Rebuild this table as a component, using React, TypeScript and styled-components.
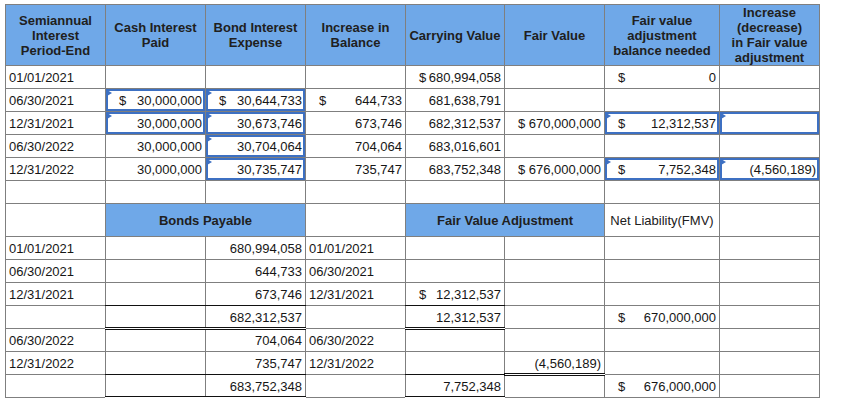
import React from "react";
import styled, { createGlobalStyle, css } from "styled-components";

const GlobalStyle = createGlobalStyle`
  html, body { margin: 0; padding: 0; background: #ffffff; }
  body { font-family: "Liberation Sans", Arial, Helvetica, sans-serif; }
`;

const SEL = "#3d70c2";
const GRID = "#7f7f7f";
const HEAD_BG = "#6fa8e8";

const Page = styled.div`
  padding: 4px 0 0 5px;
`;

const Sheet = styled.div`
  display: grid;
  grid-template-columns: 99px 99px 99px 99px 98px 99px 114px 99px;
  grid-template-rows: 60px repeat(6, 22px) 32px repeat(7, 22px);
  gap: 1px;
  width: max-content;
  background: ${GRID};
  border: 1px solid ${GRID};
`;

type Align = "left" | "right" | "center";

interface CellProps {
  $align?: Align;
  $span?: number;
  $sel?: boolean;
  $rule?: boolean;
  $dbl?: boolean;
}

const Cell = styled.div<CellProps>`
  position: relative;
  box-sizing: border-box;
  display: flex;
  align-items: center;
  justify-content: ${(p) =>
    p.$align === "right" ? "flex-end" : p.$align === "center" ? "center" : "flex-start"};
  padding: 0 3px;
  background: #ffffff;
  color: #161616;
  font-size: 13px;
  white-space: nowrap;
  grid-column: span ${(p) => p.$span ?? 1};
  ${(p) =>
    p.$sel &&
    css`
      box-shadow: inset 0 0 0 2px ${SEL};
    `}
  ${(p) =>
    p.$rule &&
    css`
      &::before {
        content: "";
        position: absolute;
        left: -1px;
        right: -1px;
        top: -1px;
        height: 1px;
        background: #111;
        z-index: 1;
      }
    `}
  ${(p) =>
    p.$dbl &&
    css`
      &::after {
        content: "";
        position: absolute;
        left: -1px;
        right: -1px;
        bottom: -2px;
        height: 3px;
        box-sizing: border-box;
        border-top: 1px solid #111;
        border-bottom: 1px solid #111;
        background: #ffffff;
        z-index: 1;
      }
    `}
`;

const HeadCell = styled(Cell)<{ $plain?: boolean }>`
  justify-content: center;
  text-align: center;
  white-space: normal;
  line-height: 15px;
  padding: 0 2px;
  font-weight: ${(p) => (p.$plain ? "normal" : "bold")};
  color: #202020;
  background: ${(p) => (p.$plain ? "#ffffff" : HEAD_BG)};
`;

const Dollar = styled.span`
  margin-left: 10px;
`;

const Amount = styled.span`
  margin-left: auto;
`;

const Marker = styled.span`
  position: absolute;
  top: 1px;
  left: 1px;
  width: 0;
  height: 0;
  border-left: 5px solid ${SEL};
  border-top: 3px solid transparent;
  border-bottom: 3px solid transparent;
`;

type Kind = "date" | "num" | "acct";

interface Spec {
  v?: string;
  k?: Kind;
  sel?: boolean;
  rule?: boolean;
  dbl?: boolean;
}

const D = (v: string): Spec => ({ v, k: "date" });
const N = (v: string, extra: Partial<Spec> = {}): Spec => ({ v, k: "num", ...extra });
const A = (v: string, extra: Partial<Spec> = {}): Spec => ({ v, k: "acct", ...extra });
const E = (extra: Partial<Spec> = {}): Spec => ({ ...extra });

const SheetCell: React.FC<{ s: Spec }> = ({ s }) => {
  const align: Align = s.k === "num" ? "right" : "left";
  return (
    <Cell $align={align} $sel={s.sel} $rule={s.rule} $dbl={s.dbl}>
      {s.sel && <Marker />}
      {s.k === "acct" ? (
        <>
          <Dollar>$</Dollar>
          <Amount>{s.v}</Amount>
        </>
      ) : (
        s.v
      )}
    </Cell>
  );
};

const headers: string[][] = [
  ["Semiannual", "Interest", "Period-End"],
  ["Cash Interest", "Paid"],
  ["Bond Interest", "Expense"],
  ["Increase in", "Balance"],
  ["Carrying Value"],
  ["Fair Value"],
  ["Fair value", "adjustment", "balance needed"],
  ["Increase", "(decrease)", "in Fair value", "adjustment"],
];

const schedule: Spec[][] = [
  [D("01/01/2021"), E(), E(), E(), A("680,994,058"), E(), A("0"), E()],
  [
    D("06/30/2021"),
    A("30,000,000", { sel: true }),
    A("30,644,733", { sel: true }),
    A("644,733"),
    N("681,638,791"),
    E(),
    E(),
    E(),
  ],
  [
    D("12/31/2021"),
    N("30,000,000", { sel: true }),
    N("30,673,746", { sel: true }),
    N("673,746"),
    N("682,312,537"),
    A("670,000,000"),
    A("12,312,537", { sel: true }),
    E({ sel: true }),
  ],
  [
    D("06/30/2022"),
    N("30,000,000"),
    N("30,704,064", { sel: true }),
    N("704,064"),
    N("683,016,601"),
    E(),
    E(),
    E(),
  ],
  [
    D("12/31/2022"),
    N("30,000,000"),
    N("30,735,747", { sel: true }),
    N("735,747"),
    N("683,752,348"),
    A("676,000,000"),
    A("7,752,348", { sel: true }),
    N("(4,560,189)", { sel: true }),
  ],
  [E(), E(), E(), E(), E(), E(), E(), E()],
];

const ledger: Spec[][] = [
  [D("01/01/2021"), E(), N("680,994,058"), D("01/01/2021"), E(), E(), E(), E()],
  [D("06/30/2021"), E(), N("644,733"), D("06/30/2021"), E(), E(), E(), E()],
  [D("12/31/2021"), E(), N("673,746"), D("12/31/2021"), A("12,312,537"), E(), E(), E()],
  [
    E(),
    E({ rule: true, dbl: true }),
    N("682,312,537", { rule: true, dbl: true }),
    E(),
    N("12,312,537", { rule: true, dbl: true }),
    E(),
    A("670,000,000"),
    E(),
  ],
  [D("06/30/2022"), E(), N("704,064"), D("06/30/2022"), E(), E(), E(), E()],
  [D("12/31/2022"), E(), N("735,747"), D("12/31/2022"), E(), N("(4,560,189)", { dbl: true }), E(), E()],
  [
    E(),
    E({ rule: true, dbl: true }),
    N("683,752,348", { rule: true, dbl: true }),
    E(),
    N("7,752,348", { rule: true, dbl: true }),
    E(),
    A("676,000,000"),
    E(),
  ],
];

export default function App() {
  return (
    <>
      <GlobalStyle />
      <Page>
        <Sheet>
          {headers.map((lines, i) => (
            <HeadCell key={`h${i}`}>
              <div>
                {lines.map((l, j) => (
                  <div key={j}>{l}</div>
                ))}
              </div>
            </HeadCell>
          ))}
          {schedule.map((row, r) =>
            row.map((s, c) => <SheetCell key={`s${r}-${c}`} s={s} />)
          )}

          <HeadCell $plain />
          <HeadCell $span={2}>Bonds Payable</HeadCell>
          <HeadCell $plain />
          <HeadCell $span={2}>Fair Value Adjustment</HeadCell>
          <HeadCell $plain>Net Liability(FMV)</HeadCell>
          <HeadCell $plain />

          {ledger.map((row, r) =>
            row.map((s, c) => <SheetCell key={`l${r}-${c}`} s={s} />)
          )}
        </Sheet>
      </Page>
    </>
  );
}
